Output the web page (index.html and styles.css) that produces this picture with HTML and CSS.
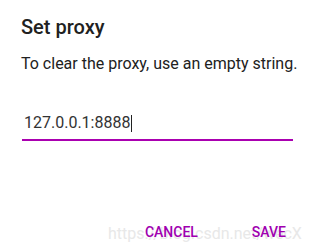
FILE: index.html
```html
<!DOCTYPE html>
<html>
<head>
<meta charset="utf-8">
<link rel="stylesheet" href="styles.css">
</head>
<body>
<div class="dialog">
  <h1 class="title">Set proxy</h1>
  <p class="message">To clear the proxy, use an empty string.</p>
  <div class="field">
    <span class="value">127.0.0.1:8888</span><span class="caret"></span>
  </div>
  <div class="actions">
    <span class="btn">CANCEL</span>
    <span class="btn">SAVE</span>
  </div>
  <div class="watermark">https://blog.csdn.net/wecX</div>
</div>
</body>
</html>
```
FILE: styles.css
```css
html, body {
  margin: 0;
  padding: 0;
  background: #fff;
}
.dialog {
  position: relative;
  width: 312px;
  height: 250px;
  box-sizing: border-box;
  padding: 15px 8px 0 21px;
  font-family: Roboto, "Liberation Sans", sans-serif;
  display: flex;
  flex-direction: column;
  overflow: hidden;
}
.title {
  margin: 0;
  font-size: 20px;
  font-weight: 500;
  line-height: 24px;
  color: #212121;
}
.message {
  margin: 15px 0 0 0;
  font-size: 16px;
  line-height: 20px;
  color: #212121;
  white-space: nowrap;
}
.field {
  margin: 39px 0 0 1px;
  width: 269px;
  border-bottom: 2px solid #aa00b0;
  padding: 0 0 6px 2px;
  display: flex;
  align-items: center;
  font-size: 16px;
  line-height: 20px;
  color: #333;
}
.caret {
  display: inline-block;
  width: 1px;
  height: 17px;
  background: #222;
  margin-left: 1px;
}
.actions {
  margin-top: auto;
  margin-bottom: 10px;
  display: flex;
  justify-content: flex-end;
  gap: 54px;
  padding-right: 18px;
  position: relative;
  z-index: 1;
}
.btn {
  font-size: 14px;
  font-weight: 500;
  color: #a000b0;
  line-height: 16px;
}
.watermark {
  position: absolute;
  left: 108px;
  top: 224px;
  font-size: 16px;
  color: #e8e8e8;
  white-space: nowrap;
  z-index: 0;
}
```
